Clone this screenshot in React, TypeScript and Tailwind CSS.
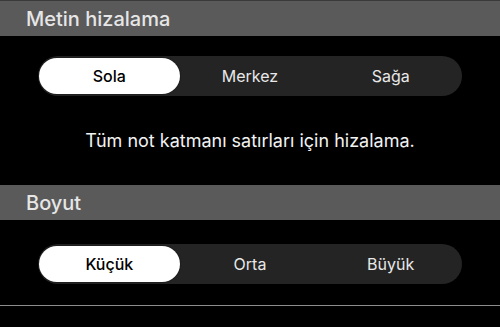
import { useState } from "react";

function Segmented({
  options,
  value,
  onChange,
}: {
  options: string[];
  value: number;
  onChange: (i: number) => void;
}) {
  return (
    <div className="mx-[38px] flex h-[40px] items-center rounded-full bg-[#242424] px-[1px]">
      {options.map((opt, i) => (
        <button
          key={opt}
          onClick={() => onChange(i)}
          className={`flex h-[36px] flex-1 items-center justify-center rounded-full text-[16px] ${
            value === i
              ? "bg-white font-medium text-black shadow-[0_0_2px_rgba(0,0,0,0.6)]"
              : "text-[#e8e8e8]"
          }`}
        >
          {opt}
        </button>
      ))}
    </div>
  );
}

function SectionHeader({ title }: { title: string }) {
  return (
    <div className="flex h-[35px] items-center bg-[#5a5a5a] pl-[26px]">
      <h2 className="text-[20px] font-medium text-[#e6e6e6]">{title}</h2>
    </div>
  );
}

export default function App() {
  const [align, setAlign] = useState(0);
  const [size, setSize] = useState(0);

  return (
    <div className="h-[327px] w-[500px] overflow-hidden bg-black font-['Inter',sans-serif]">
      <div className="h-px bg-[#3a3a3a]" />
      <SectionHeader title="Metin hizalama" />
      <div className="pt-[20px]">
        <Segmented
          options={["Sola", "Merkez", "Sağa"]}
          value={align}
          onChange={setAlign}
        />
      </div>
      {/* description */}
      <p className="pb-[32px] pt-[33px] text-center text-[18px] leading-[24px] text-[#f2f2f2]">
        Tüm not katmanı satırları için hizalama.
      </p>
      <SectionHeader title="Boyut" />
      <div className="pt-[24px]">
        <Segmented
          options={["Küçük", "Orta", "Büyük"]}
          value={size}
          onChange={setSize}
        />
      </div>
      <div className="mt-[21px] h-px bg-[#8c8c8c]" />
    </div>
  );
}
